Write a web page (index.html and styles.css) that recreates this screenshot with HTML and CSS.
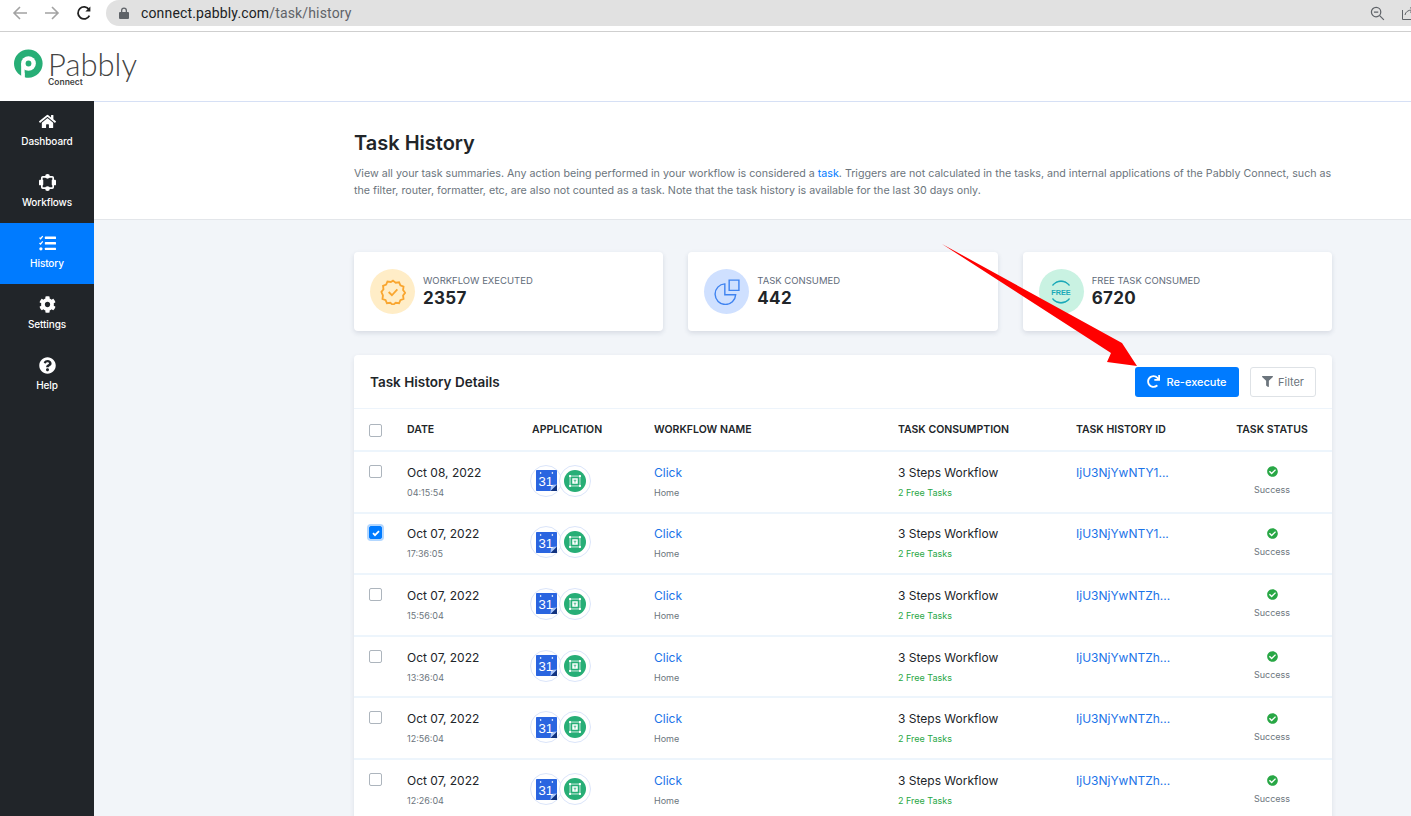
FILE: index.html
```html
<!DOCTYPE html>
<html lang="en">
<head>
    <meta charset="UTF-8">
    <meta name="viewport" content="width=device-width, initial-scale=1.0">
    <title>Task History</title>
    <link rel="stylesheet" href="styles.css">
</head>
<body>

    <!-- Shared icons -->
    <svg class="icon-defs" width="0" height="0">
        <symbol id="i-check" viewBox="0 0 512 512"><path d="M504 256c0 136.967-111.033 248-248 248S8 392.967 8 256 119.033 8 256 8s248 111.033 248 248zM227.314 387.314l184-184c6.248-6.248 6.248-16.379 0-22.627l-22.627-22.627c-6.248-6.249-16.379-6.249-22.628 0L216 308.118l-70.059-70.059c-6.248-6.248-16.379-6.248-22.628 0l-22.627 22.627c-6.248 6.248-6.248 16.379 0 22.627l104 104c6.249 6.249 16.379 6.249 22.628.001z"/></symbol>
        <symbol id="i-calendar" viewBox="0 0 32 32">
            <rect x="0" y="0" width="32" height="32" rx="1" fill="#2a65e0"/>
            <path d="M32 22 L22 32 H32 Z" fill="#12337f"/>
            <path d="M22 32 L32 22 L23 23 Z" fill="#a9c4f5"/>
            <rect x="6" y="3" width="2" height="3" fill="#cfdcf8"/>
            <rect x="24" y="3" width="2" height="3" fill="#cfdcf8"/>
            <text x="15" y="25" text-anchor="middle" class="cal-text">31</text>
        </symbol>
        <symbol id="i-pabbly" viewBox="0 0 32 32">
            <circle cx="16" cy="16" r="16" fill="#27ae76"/>
            <rect x="8.8" y="8.8" width="14.4" height="14.4" fill="none" stroke="#fff" stroke-width="1.1"/>
            <rect x="7.4" y="7.4" width="2.8" height="2.8" fill="#fff"/>
            <rect x="21.8" y="7.4" width="2.8" height="2.8" fill="#fff"/>
            <rect x="7.4" y="21.8" width="2.8" height="2.8" fill="#fff"/>
            <rect x="21.8" y="21.8" width="2.8" height="2.8" fill="#fff"/>
            <rect x="12" y="12" width="8" height="8" fill="#fff"/>
            <path d="M14 14h4v1.2h-1.4V18h-1.2v-2.8H14z" fill="#27ae76"/>
        </symbol>
    </svg>

    <!-- Browser Bar -->
    <div class="browser-bar">
        <div class="browser-buttons">
            <svg class="browser-icon" viewBox="0 0 16 16" fill="none" stroke="#a3a3a3" stroke-width="1.6"><path d="M15 8H2M8 2L2 8l6 6"/></svg>
            <svg class="browser-icon" viewBox="0 0 16 16" fill="none" stroke="#a3a3a3" stroke-width="1.6"><path d="M1 8h13M8 2l6 6-6 6"/></svg>
            <svg class="browser-icon" viewBox="0 0 16 16" fill="none" stroke="#222" stroke-width="1.8"><path d="M13.4 10.6A6 6 0 1 1 13 4.6"/><path d="M14.4 1.4v5h-5z" fill="#222" stroke="none"/></svg>
        </div>
        <div class="url-pill">
            <svg class="lock-icon" viewBox="0 0 10 12"><path d="M2 5V3.4a3 3 0 0 1 6 0V5h1a1 1 0 0 1 1 1v5a1 1 0 0 1-1 1H1a1 1 0 0 1-1-1V6a1 1 0 0 1 1-1zm1.3 0h3.4V3.4a1.7 1.7 0 0 0-3.4 0z" fill="#5f6368"/></svg>
            <span class="url-text">connect.pabbly.com<span class="url-path">/task/history</span></span>
            <svg class="zoom-icon" viewBox="0 0 16 16" fill="none" stroke="#5f6368" stroke-width="1.3"><circle cx="6.5" cy="6.5" r="5"/><path d="M4.2 6.5h4.6M10.3 10.3l4.5 4.5"/></svg>
            <svg class="share-icon" viewBox="0 0 12 14" fill="none" stroke="#5f6368" stroke-width="1"><path d="M.5 4v9.5H12M3 9c.5-3 3-5 7-5M8 1.5L11 4 8 6.5"/></svg>
        </div>
    </div>

    <!-- App Header -->
    <header class="app-header">
        <div class="logo">
            <svg class="logo-mark" viewBox="0 0 30 30">
                <path d="M15 0a15 15 0 1 1-5 29.1V15a5 5 0 1 1 5 5v-4.6" fill="none"/>
                <path d="M15 0a14.6 14.6 0 0 1 0 29.2c-1.4 0-2.8-.2-4-.6V24H10v4.4C4.2 26.400 0 21 0 14.600A14.800 14.800 0 0 1 15 0z" fill="#27ae76"/>
                <circle cx="15" cy="14.500" r="7.600" fill="#fff"/>
                <circle cx="15" cy="14.500" r="3" fill="#27ae76"/>
                <rect x="7.400" y="14.500" width="3.600" height="15" fill="#fff"/>
            </svg>
            <div class="logo-text">
                <span class="logo-name">Pabbly</span>
                <span class="logo-sub">Connect</span>
            </div>
        </div>
    </header>

    <div class="app-body">
        <!-- Sidebar -->
        <aside class="sidebar">
            <a class="side-item">
                <svg class="side-icon" viewBox="0 0 576 512"><path d="M280.37 148.26L96 300.11V464a16 16 0 0 0 16 16l112.06-.29a16 16 0 0 0 15.92-16V368a16 16 0 0 1 16-16h64a16 16 0 0 1 16 16v95.64a16 16 0 0 0 16 16.05L464 480a16 16 0 0 0 16-16V300L295.67 148.26a12.19 12.19 0 0 0-15.3 0zM571.6 251.47L488 182.56V44.05a12 12 0 0 0-12-12h-56a12 12 0 0 0-12 12v72.61L318.47 43a48 48 0 0 0-61 0L4.34 251.47a12 12 0 0 0-1.6 16.9l25.5 31A12 12 0 0 0 45.15 301l235.22-193.74a12.19 12.19 0 0 1 15.3 0L530.9 301a12 12 0 0 0 16.9-1.6l25.5-31a12 12 0 0 0-1.7-16.93z"/></svg>
                Dashboard
            </a>
            <a class="side-item">
                <svg class="side-icon" viewBox="0 0 18 18"><path d="M4 3h10a1 1 0 0 1 1 1v10a1 1 0 0 1-1 1H4a1 1 0 0 1-1-1V4a1 1 0 0 1 1-1z" fill="none" stroke="#fff" stroke-width="1.800"/><circle cx="9" cy="2.500" r="2.500"/><circle cx="9" cy="15.500" r="2.500"/><rect x="0" y="6" width="4.500" height="6" rx="1"/><rect x="13.500" y="6" width="4.500" height="6" rx="1"/></svg>
                Workflows
            </a>
            <a class="side-item active">
                <svg class="side-icon" viewBox="0 0 16 15"><path d="M.5 2l1 1L3.500.5M.5 7l1 1 2-2.500" fill="none" stroke="#fff" stroke-width="1.200"/><circle cx="1.800" cy="12.500" r="1.500"/><rect x="5.500" y="1" width="10.500" height="2.200" rx=".5"/><rect x="5.500" y="6.200" width="10.500" height="2.200" rx=".5"/><rect x="5.500" y="11.400" width="10.500" height="2.200" rx=".5"/></svg>
                History
            </a>
            <a class="side-item">
                <svg class="side-icon" viewBox="0 0 512 512"><path d="M487.4 315.7l-42.6-24.6c4.3-23.2 4.3-47 0-70.2l42.6-24.6c4.9-2.8 7.1-8.6 5.5-14-11.1-35.6-30-67.8-54.7-94.6-3.8-4.1-10-5.1-14.8-2.3L380.8 110c-17.9-15.4-38.5-27.3-60.8-35.1V25.8c0-5.6-3.9-10.5-9.4-11.7-36.7-8.2-74.3-7.8-109.2 0-5.5 1.2-9.4 6.1-9.4 11.7V75c-22.2 7.9-42.8 19.8-60.8 35.1L88.7 85.5c-4.9-2.8-11-1.9-14.8 2.3-24.7 26.7-43.6 58.9-54.7 94.6-1.7 5.4.6 11.2 5.5 14L67.3 221c-4.3 23.2-4.3 47 0 70.2l-42.6 24.6c-4.9 2.8-7.1 8.6-5.5 14 11.1 35.6 30 67.8 54.7 94.6 3.8 4.1 10 5.1 14.8 2.3l42.6-24.6c17.9 15.4 38.5 27.3 60.8 35.1v49.2c0 5.6 3.9 10.5 9.4 11.7 36.7 8.2 74.3 7.8 109.2 0 5.5-1.2 9.4-6.1 9.4-11.7v-49.2c22.2-7.9 42.8-19.8 60.8-35.1l42.6 24.6c4.9 2.8 11 1.9 14.8-2.3 24.7-26.7 43.6-58.9 54.7-94.6 1.5-5.5-.7-11.3-5.6-14.1zM256 336c-44.1 0-80-35.9-80-80s35.9-80 80-80 80 35.9 80 80-35.9 80-80 80z"/></svg>
                Settings
            </a>
            <a class="side-item">
                <svg class="side-icon" viewBox="0 0 512 512"><path d="M504 256c0 136.997-111.043 248-248 248S8 392.997 8 256C8 119.083 119.043 8 256 8s248 111.083 248 248zM262.655 90c-54.497 0-89.255 22.957-116.549 63.758-3.536 5.286-2.353 12.415 2.715 16.258l34.699 26.31c5.205 3.947 12.621 3.008 16.665-2.122 17.864-22.658 30.113-35.797 57.303-35.797 20.429 0 45.698 13.148 45.698 32.958 0 14.976-12.363 22.667-32.534 33.976C247.128 238.528 216 254.941 216 296v4c0 6.627 5.373 12 12 12h56c6.627 0 12-5.373 12-12v-1.333c0-28.462 83.186-29.647 83.186-106.667 0-58.002-60.165-102-116.531-102zM256 338c-25.365 0-46 20.635-46 46 0 25.364 20.635 46 46 46s46-20.636 46-46c0-25.365-20.635-46-46-46z"/></svg>
                Help
            </a>
        </aside>

        <main class="main">
            <!-- Page Heading -->
            <section class="page-head">
                <h1>Task History</h1>
                <p>View all your task summaries. Any action being performed in your workflow is considered a <a class="link">task</a>. Triggers are not calculated in the tasks, and internal applications of the Pabbly Connect, such as the filter, router, formatter, etc, are also not counted as a task. Note that the task history is available for the last 30 days only.</p>
            </section>

            <div class="content">
                <!-- Summary Cards -->
                <div class="stats">
                    <div class="stat-card">
                        <div class="stat-circle orange">
                            <svg viewBox="0 0 24 24" fill="none" stroke="#f9a630" stroke-width="1.700"><path d="M12 1.500l2.500 1.900 3.100-.4 1.200 2.900 2.900 1.200-.4 3.100 1.900 2.500-1.900 2.500.4 3.100-2.900 1.200-1.200 2.900-3.100-.4-2.500 1.900-2.500-1.900-3.100.4-1.200-2.900-2.900-1.200.4-3.100L1.300 12l1.900-2.500-.4-3.100 2.900-1.200L6.900 2.300l3.100.4z"/><path d="M8 12l3 3 5-5.500"/></svg>
                        </div>
                        <div>
                            <div class="stat-label">WORKFLOW EXECUTED</div>
                            <div class="stat-value">2357</div>
                        </div>
                    </div>
                    <div class="stat-card">
                        <div class="stat-circle blue">
                            <svg viewBox="0 0 24 24" fill="none" stroke="#3f83f0" stroke-width="1.300"><path d="M10 4.500a9.500 9.500 0 1 0 10 10H10z"/><path d="M14 1h9v9.500h-9z"/></svg>
                        </div>
                        <div>
                            <div class="stat-label">TASK CONSUMED</div>
                            <div class="stat-value">442</div>
                        </div>
                    </div>
                    <div class="stat-card">
                        <div class="stat-circle green">
                            <svg viewBox="0 0 32 32" fill="none" stroke="#1aa9b8" stroke-width="1.500"><path d="M5.500 8A13.500 13.500 0 0 1 26.500 8M5.500 24A13.500 13.500 0 0 0 26.500 24"/><path d="M7 6.500A11.500 11.500 0 0 1 25 6.500M7 25.500A11.500 11.500 0 0 0 25 25.500" stroke-width=".9"/><text x="16" y="20" text-anchor="middle" class="free-text">FREE</text></svg>
                        </div>
                        <div>
                            <div class="stat-label">FREE TASK CONSUMED</div>
                            <div class="stat-value">6720</div>
                        </div>
                    </div>
                </div>

                <!-- History Table -->
                <section class="table-card">
                    <div class="table-head">
                        <h2>Task History Details</h2>
                        <div class="table-actions">
                            <button class="btn-primary" type="button">
                                <svg viewBox="0 0 512 512"><path d="M500.33 0h-47.41a12 12 0 0 0-12 12.57l4 82.76A247.42 247.42 0 0 0 256 8C119.34 8 7.9 119.53 8 256.19 8.1 393.07 119.1 504 256 504a247.1 247.1 0 0 0 166.18-63.91 12 12 0 0 0 .48-17.43l-34-34a12 12 0 0 0-16.38-.55A176 176 0 1 1 402.1 157.8l-101.53-4.87a12 12 0 0 0-12.57 12v47.41a12 12 0 0 0 12 12h200.33a12 12 0 0 0 12-12V12a12 12 0 0 0-12-12z"/></svg>
                                Re-execute
                            </button>
                            <button class="btn-filter" type="button">
                                <svg viewBox="0 0 512 512"><path d="M487.976 0H24.028C2.71 0-8.047 25.866 7.058 40.971L192 225.941V432c0 7.831 3.821 15.17 10.237 19.662l80 55.98C298.02 518.69 320 507.493 320 487.98V225.941l184.947-184.97C520.021 25.896 509.338 0 487.976 0z"/></svg>
                                Filter
                            </button>
                        </div>
                    </div>
                    <table class="history">
                        <colgroup>
                            <col class="col-check"><col class="col-date"><col class="col-app"><col class="col-flow"><col class="col-use"><col class="col-id"><col class="col-status">
                        </colgroup>
                        <thead>
                            <tr>
                                <th><span class="checkbox"></span></th>
                                <th>DATE</th>
                                <th>APPLICATION</th>
                                <th>WORKFLOW NAME</th>
                                <th>TASK CONSUMPTION</th>
                                <th>TASK HISTORY ID</th>
                                <th class="center">TASK STATUS</th>
                            </tr>
                        </thead>
                        <tbody>
                            <tr>
                                <td><span class="checkbox"></span></td>
                                <td><div class="main-text">Oct 08, 2022</div><div class="sub-text">04:15:54</div></td>
                                <td><div class="apps"><span class="app-icon"><svg><use href="#i-calendar"/></svg></span><span class="app-icon round"><svg><use href="#i-pabbly"/></svg></span></div></td>
                                <td><div class="main-text link">Click</div><div class="sub-text">Home</div></td>
                                <td><div class="main-text">3 Steps Workflow</div><div class="sub-text free">2 Free Tasks</div></td>
                                <td class="task-id"><div class="main-text link">IjU3NjYwNTY1...</div><div class="sub-text">&nbsp;</div></td>
                                <td class="center"><svg class="ok-icon"><use href="#i-check"/></svg><div class="sub-text">Success</div></td>
                            </tr>
                            <tr>
                                <td><span class="checkbox checked"><svg viewBox="0 0 10 10" fill="none" stroke="#fff" stroke-width="1.800"><path d="M2 5.200l2 2 4-4"/></svg></span></td>
                                <td><div class="main-text">Oct 07, 2022</div><div class="sub-text">17:36:05</div></td>
                                <td><div class="apps"><span class="app-icon"><svg><use href="#i-calendar"/></svg></span><span class="app-icon round"><svg><use href="#i-pabbly"/></svg></span></div></td>
                                <td><div class="main-text link">Click</div><div class="sub-text">Home</div></td>
                                <td><div class="main-text">3 Steps Workflow</div><div class="sub-text free">2 Free Tasks</div></td>
                                <td class="task-id"><div class="main-text link">IjU3NjYwNTY1...</div><div class="sub-text">&nbsp;</div></td>
                                <td class="center"><svg class="ok-icon"><use href="#i-check"/></svg><div class="sub-text">Success</div></td>
                            </tr>
                            <tr>
                                <td><span class="checkbox"></span></td>
                                <td><div class="main-text">Oct 07, 2022</div><div class="sub-text">15:56:04</div></td>
                                <td><div class="apps"><span class="app-icon"><svg><use href="#i-calendar"/></svg></span><span class="app-icon round"><svg><use href="#i-pabbly"/></svg></span></div></td>
                                <td><div class="main-text link">Click</div><div class="sub-text">Home</div></td>
                                <td><div class="main-text">3 Steps Workflow</div><div class="sub-text free">2 Free Tasks</div></td>
                                <td class="task-id"><div class="main-text link">IjU3NjYwNTZh...</div><div class="sub-text">&nbsp;</div></td>
                                <td class="center"><svg class="ok-icon"><use href="#i-check"/></svg><div class="sub-text">Success</div></td>
                            </tr>
                            <tr>
                                <td><span class="checkbox"></span></td>
                                <td><div class="main-text">Oct 07, 2022</div><div class="sub-text">13:36:04</div></td>
                                <td><div class="apps"><span class="app-icon"><svg><use href="#i-calendar"/></svg></span><span class="app-icon round"><svg><use href="#i-pabbly"/></svg></span></div></td>
                                <td><div class="main-text link">Click</div><div class="sub-text">Home</div></td>
                                <td><div class="main-text">3 Steps Workflow</div><div class="sub-text free">2 Free Tasks</div></td>
                                <td class="task-id"><div class="main-text link">IjU3NjYwNTZh...</div><div class="sub-text">&nbsp;</div></td>
                                <td class="center"><svg class="ok-icon"><use href="#i-check"/></svg><div class="sub-text">Success</div></td>
                            </tr>
                            <tr>
                                <td><span class="checkbox"></span></td>
                                <td><div class="main-text">Oct 07, 2022</div><div class="sub-text">12:56:04</div></td>
                                <td><div class="apps"><span class="app-icon"><svg><use href="#i-calendar"/></svg></span><span class="app-icon round"><svg><use href="#i-pabbly"/></svg></span></div></td>
                                <td><div class="main-text link">Click</div><div class="sub-text">Home</div></td>
                                <td><div class="main-text">3 Steps Workflow</div><div class="sub-text free">2 Free Tasks</div></td>
                                <td class="task-id"><div class="main-text link">IjU3NjYwNTZh...</div><div class="sub-text">&nbsp;</div></td>
                                <td class="center"><svg class="ok-icon"><use href="#i-check"/></svg><div class="sub-text">Success</div></td>
                            </tr>
                            <tr>
                                <td><span class="checkbox"></span></td>
                                <td><div class="main-text">Oct 07, 2022</div><div class="sub-text">12:26:04</div></td>
                                <td><div class="apps"><span class="app-icon"><svg><use href="#i-calendar"/></svg></span><span class="app-icon round"><svg><use href="#i-pabbly"/></svg></span></div></td>
                                <td><div class="main-text link">Click</div><div class="sub-text">Home</div></td>
                                <td><div class="main-text">3 Steps Workflow</div><div class="sub-text free">2 Free Tasks</div></td>
                                <td class="task-id"><div class="main-text link">IjU3NjYwNTZh...</div><div class="sub-text">&nbsp;</div></td>
                                <td class="center"><svg class="ok-icon"><use href="#i-check"/></svg><div class="sub-text">Success</div></td>
                            </tr>
                        </tbody>
                    </table>
                </section>
            </div>
        </main>
    </div>

    <!-- Red annotation arrow drawn over the page -->
    <svg class="annotation" viewBox="0 0 1411 816">
        <path d="M942 244 L1122 343 L1137 366 L1107 362 L1111 353 Z" fill="#f00"/>
    </svg>

</body>
</html>
```

FILE: styles.css
```css
/* Reset */
* {
    margin: 0;
    padding: 0;
    box-sizing: border-box;
}

html, body {
    height: 816px;
    overflow: hidden;
}

body {
    font-family: 'Inter', 'Open Sans', sans-serif;
    background: #fff;
    color: #212529;
    display: flex;
    flex-direction: column;
}

.icon-defs {
    position: absolute;
}

.cal-text {
    font-family: 'Liberation Sans', sans-serif;
    font-size: 20px;
    fill: #fff;
}

.free-text {
    font-family: 'Liberation Sans', sans-serif;
    font-size: 9px;
    font-weight: 700;
    fill: #1aa9b8;
    stroke: none;
}

/* Browser Bar */
.browser-bar {
    height: 32px;
    flex: none;
    display: flex;
    padding-bottom: 5px;
    border-bottom: 1px solid #cfcfcf;
}

.browser-buttons {
    width: 106px;
    flex: none;
    display: flex;
    align-items: center;
    gap: 16px;
    padding-left: 12px;
}

.browser-icon {
    width: 16px;
    height: 16px;
}

.url-pill {
    flex: 1;
    background: #e1e1e1;
    border-radius: 14px 0 0 14px;
    display: flex;
    align-items: center;
    padding-left: 13px;
    position: relative;
}

.lock-icon {
    width: 10px;
    height: 12px;
    margin-right: 12px;
}

.url-text {
    font-family: 'Roboto', sans-serif;
    font-size: 14px;
    color: #202124;
    letter-spacing: .15px;
}

.url-path {
    color: #5f6368;
}

.zoom-icon {
    width: 15px;
    height: 15px;
    margin-left: auto;
    margin-right: 17px;
}

.share-icon {
    width: 12px;
    height: 14px;
    margin-right: -3px;
}

/* App Header */
.app-header {
    height: 69px;
    flex: none;
    background: #fff;
    display: flex;
    align-items: center;
    padding-left: 14px;
}

.logo {
    display: flex;
    gap: 5px;
    align-items: flex-start;
    margin-top: 2px;
}

.logo-mark {
    width: 29px;
    height: 30px;
}

.logo-text {
    display: flex;
    flex-direction: column;
}

.logo-name {
    font-family: 'Lato', sans-serif;
    font-weight: 300;
    font-size: 31px;
    line-height: 28px;
    color: #444;
    margin-top: 1px;
}

.logo-sub {
    font-size: 8.5px;
    font-weight: 600;
    line-height: 9px;
    color: #444;
}

.app-body {
    flex: 1;
    display: flex;
    min-height: 0;
}

/* Sidebar */
.sidebar {
    width: 94px;
    flex: none;
    background: #212529;
}

.side-item {
    height: 61px;
    display: flex;
    flex-direction: column;
    align-items: center;
    gap: 5px;
    padding-top: 12px;
    color: #fff;
    font-size: 10px;
    font-weight: 500;
    letter-spacing: -.1px;
}

.side-item.active {
    background: #007bff;
}

.side-icon {
    width: 17px;
    height: 17px;
    fill: #fff;
}

/* Main Content */
.main {
    flex: 1;
    background: #f2f5f9;
    min-width: 0;
}

.page-head {
    height: 119px;
    background: #fff;
    border-top: 1px solid #d6e0f5;
    border-bottom: 1px solid #e3e6ea;
    padding: 28px 78px 0 260px;
}

h1 {
    font-size: 20px;
    font-weight: 600;
    line-height: 26px;
    margin-bottom: 9px;
}

.page-head p {
    font-size: 10.7px;
    line-height: 17px;
    color: #6c757d;
}

.link {
    color: #1a73e8;
}

.page-head .link {
    color: #007bff;
}

.content {
    padding: 32px 79px 0 260px;
}

/* Summary Cards */
.stats {
    display: grid;
    grid-template-columns: repeat(3, 1fr);
    gap: 25px;
    margin-bottom: 24px;
}

.stat-card {
    height: 79px;
    background: #fff;
    border-radius: 4px;
    box-shadow: 0 2px 5px rgba(40, 60, 90, .14);
    display: flex;
    align-items: center;
    gap: 8px;
    padding-left: 16px;
}

.stat-circle {
    width: 45px;
    height: 45px;
    border-radius: 50%;
    display: flex;
    align-items: center;
    justify-content: center;
}

.stat-circle svg {
    width: 26px;
    height: 26px;
}

.orange { background: #ffedc7; }
.blue { background: #cfe0ff; }
.green { background: #c9f2e2; }

.stat-label {
    font-size: 9.5px;
    line-height: 13px;
    color: #5f6b7a;
}

.stat-value {
    font-size: 17px;
    font-weight: 700;
    line-height: 23px;
    letter-spacing: .3px;
}

/* Table Card */
.table-card {
    background: #fff;
    border-radius: 4px 4px 0 0;
    box-shadow: 0 2px 5px rgba(40, 60, 90, .1);
}

.table-head {
    height: 54px;
    display: flex;
    align-items: center;
    justify-content: space-between;
    padding: 0 16px;
    border-bottom: 1px solid #edf4fb;
}

h2 {
    font-size: 13.500px;
    font-weight: 600;
}

.table-actions {
    display: flex;
    gap: 11px;
}

.btn-primary, .btn-filter {
    height: 30px;
    border-radius: 3px;
    font-family: inherit;
    font-size: 11px;
    display: flex;
    align-items: center;
    justify-content: center;
    cursor: pointer;
}

.btn-primary {
    width: 104px;
    gap: 6px;
    background: #007bff;
    border: none;
    color: #fff;
    font-weight: 500;
}

.btn-primary svg {
    width: 13px;
    height: 13px;
    fill: #fff;
}

.btn-filter {
    width: 66px;
    gap: 5px;
    background: #fff;
    border: 1px solid #dee2e6;
    color: #6c757d;
}

.btn-filter svg {
    width: 11px;
    height: 11px;
    fill: #6c757d;
}

.history {
    width: 100%;
    border-collapse: collapse;
    table-layout: fixed;
}

.col-check { width: 53px; }
.col-date { width: 125px; }
.col-app { width: 122px; }
.col-flow { width: 244px; }
.col-use { width: 178px; }
.col-id { width: 140px; }

th {
    height: 42px;
    text-align: left;
    font-size: 10.500px;
    font-weight: 600;
    color: #212529;
    vertical-align: middle;
}

td {
    height: 61.600px;
    vertical-align: middle;
    border-top: 2px solid #edf5fc;
}

th:first-child, td:first-child {
    padding-left: 15px;
}

.center {
    text-align: center;
    padding-right: 4px;
}

.checkbox {
    display: flex;
    align-items: center;
    justify-content: center;
    width: 13px;
    height: 13px;
    border: 1px solid #adb5bd;
    border-radius: 2px;
    background: #fff;
}

td .checkbox {
    margin-top: -17px;
}

th .checkbox {
    margin-top: 1px;
}

.checkbox.checked {
    background: #007bff;
    border-color: #007bff;
    box-shadow: 0 0 0 2px #b3d7ff;
}

.checkbox svg {
    width: 10px;
    height: 10px;
}

.main-text {
    font-size: 12px;
    line-height: 18px;
}

.sub-text {
    font-size: 9px;
    line-height: 15px;
    margin-top: 3px;
    color: #6c757d;
}

.sub-text.free {
    color: #28a745;
}

.task-id .main-text {
    white-space: nowrap;
}

.apps {
    display: flex;
    margin-left: -2px;
    margin-top: -2px;
}

.app-icon {
    width: 32px;
    height: 32px;
    border: 1px solid #dbe5fa;
    border-radius: 50%;
    background: #fff;
    display: flex;
    align-items: center;
    justify-content: center;
}

.app-icon + .app-icon {
    margin-left: -3px;
}

.app-icon svg {
    width: 21px;
    height: 21px;
}

.app-icon.round svg {
    width: 22px;
    height: 22px;
}

.ok-icon {
    display: block;
    width: 11px;
    height: 11px;
    margin: 0 auto 5px;
    fill: #28a745;
}

/* Annotation */
.annotation {
    position: absolute;
    left: 0;
    top: 0;
    width: 1411px;
    height: 816px;
    pointer-events: none;
}
```
